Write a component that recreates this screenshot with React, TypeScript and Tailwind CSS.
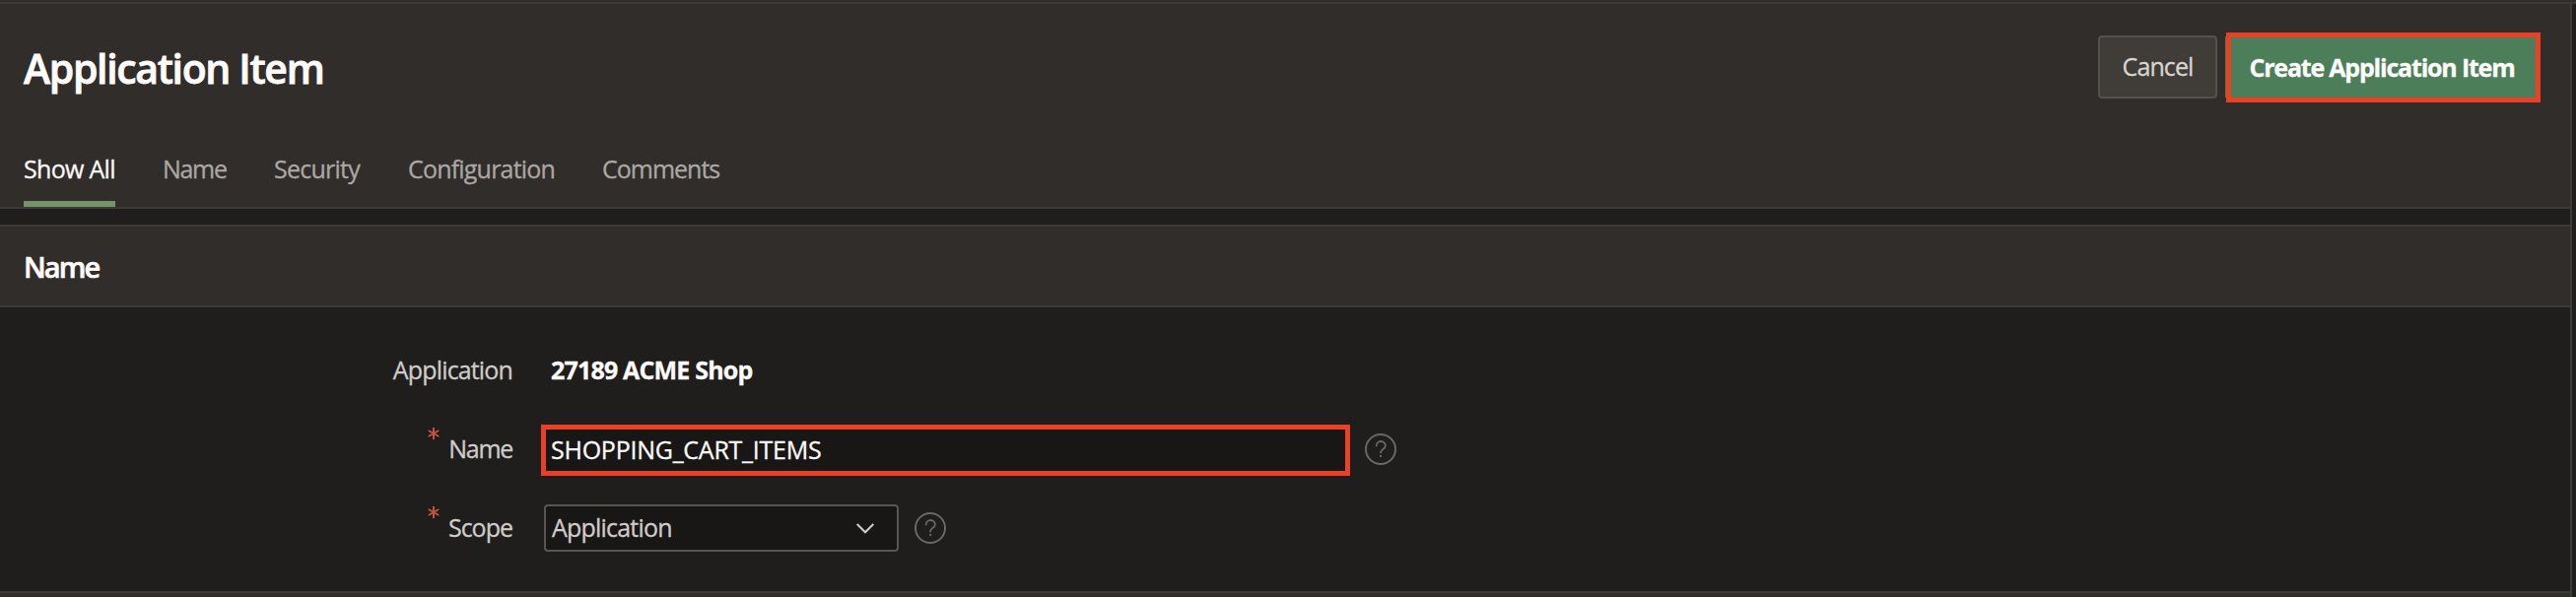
import React from "react";

const tabs = [
  { label: "Show All", cls: "w-[93px] tracking-[-0.7px] text-[#fbf9f8]", active: true },
  { label: "Name", cls: "w-[65px] tracking-[-1.3px] text-[#aaa7a4]" },
  { label: "Security", cls: "w-[88px] tracking-[-0.75px] text-[#aaa7a4]" },
  { label: "Configuration", cls: "w-[149px] tracking-[-0.8px] text-[#aaa7a4]" },
  { label: "Comments", cls: "w-[119px] tracking-[-1px] text-[#aaa7a4]" },
];

function HelpIcon() {
  return (
    <svg className="size-8 shrink-0" viewBox="0 0 32 32" fill="none" stroke="#6a6764">
      <circle cx="16" cy="16" r="15" strokeWidth="2" />
      <path d="M11.7 13.2v-.6a4.6 4.6 0 0 1 9.2 0c0 3.5-4.8 3.4-4.8 6.6v1" strokeWidth="1.8" />
      <path d="M16.1 22v2" strokeWidth="2" />
    </svg>
  );
}

function Label({ text, required, cls }: { text: string; required?: boolean; cls: string }) {
  return (
    <div className="flex h-12 w-[520px] shrink-0 items-center justify-end text-[#cfccc9]">
      {required && (
        <svg className="mr-[9px] mb-[32px] size-[12px]" viewBox="0 0 12 12" stroke="#c2533f" strokeWidth="2">
          <path d="M6 0v12M.8 3l10.4 6M11.2 3L.8 9" />
        </svg>
      )}
      <span className={cls}>{text}</span>
    </div>
  );
}

export default function App() {
  return (
    <div className="flex h-[606px] w-[2614px] flex-col overflow-hidden whitespace-nowrap bg-[#201e1c] font-['Open_Sans',sans-serif] text-[25px] [-webkit-text-stroke-width:0.3px]">
      <div className="h-1 shrink-0 border-b-2 border-[#3e3b37] bg-[#312d2a]" />
      <div className="flex w-[2610px] grow flex-col border-r-2 border-[#3e3b37]">
        <header className="flex h-[208px] shrink-0 flex-col justify-between border-b-2 border-[#3e3b37] bg-[#312d2a] pl-6">
          <div className="flex h-[130px] items-start justify-between pr-[30px]">
            <h1 className="pt-[37px] text-[41px] leading-[56px] font-semibold tracking-[-1.35px] text-[#fdfbfa] [-webkit-text-stroke-width:0.8px]">Application Item</h1>
            <div className="flex pt-[29px]">
              <button className="mt-[3px] mr-[8px] flex h-16 w-[121px] items-center justify-center rounded-[4px] border-2 border-[#55514d] bg-[#403c38] tracking-[-0.9px] text-[#d8d5d1]">
                Cancel
              </button>
              <span className="mt-[4px] h-[62px] w-px bg-[#4c7f59]" />
              <button className="flex h-[71px] w-[319px] items-center justify-center border-[5px] border-[#ea4025] bg-[#4c7f59] pr-[3px] font-bold tracking-[-1.2px] text-[#fdfbfa]">
                Create Application Item
              </button>
            </div>
          </div>
          <nav className="flex h-[72px] gap-[48px]">
            {tabs.map((t) => (
              <a key={t.label} className={"flex h-full flex-col justify-between pt-[16px] leading-[34px] " + t.cls}>
                <span>{t.label}</span>
                {t.active && <span className="h-[6px] bg-[#759468]" />}
              </a>
            ))}
          </nav>
        </header>
        <section className="mt-4 flex grow flex-col border-t-2 border-[#3e3b37]">
          <h2 className="flex h-[82px] items-center border-b-2 border-[#3e3b37] bg-[#312d2a] pt-[2px] pl-6 text-[29px] font-semibold tracking-[-1.9px] text-[#fdfbfa] [-webkit-text-stroke-width:0.6px]">
            Name
          </h2>
          <div className="flex h-[288px] flex-col gap-8 pt-[40px]">
            <div className="flex h-12">
              <Label text="Application" cls="tracking-[-0.85px]" />
              <div className="ml-[39px] flex items-center font-bold tracking-[-0.82px] text-[#fdfbfa]">27189 ACME Shop</div>
            </div>
            <div className="flex h-12 items-center">
              <Label text="Name" required cls="tracking-[-1.3px]" />
              <div className="mt-[2px] ml-[29px] flex h-[52px] w-[821px] items-center border-[5px] border-[#ea4025] bg-[#191715] pl-[5px] tracking-[-0.25px] text-[#fbf9f8]">
                SHOPPING_CART_ITEMS
              </div>
              <div className="ml-[15px]"><HelpIcon /></div>
            </div>
            <div className="flex h-12 items-center">
              <Label text="Scope" required cls="tracking-[-1px]" />
              <div className="ml-[32px] flex h-12 w-[360px] items-center justify-between rounded-[4px] border-2 border-[#5a5550] bg-[#191715] pr-[23px] pl-[6px] tracking-[-0.8px] text-[#cfccc9]">
                Application
                <svg className="h-[11px] w-[18px]" viewBox="0 0 18 11" fill="none" stroke="#cfccc9" strokeWidth="2">
                  <path d="M.7 1l8.3 8.3L17.3 1" />
                </svg>
              </div>
              <div className="ml-4"><HelpIcon /></div>
            </div>
          </div>
          <div className="grow border-t-2 border-[#3e3b37] bg-[#312d2a]" />
        </section>
      </div>
    </div>
  );
}
